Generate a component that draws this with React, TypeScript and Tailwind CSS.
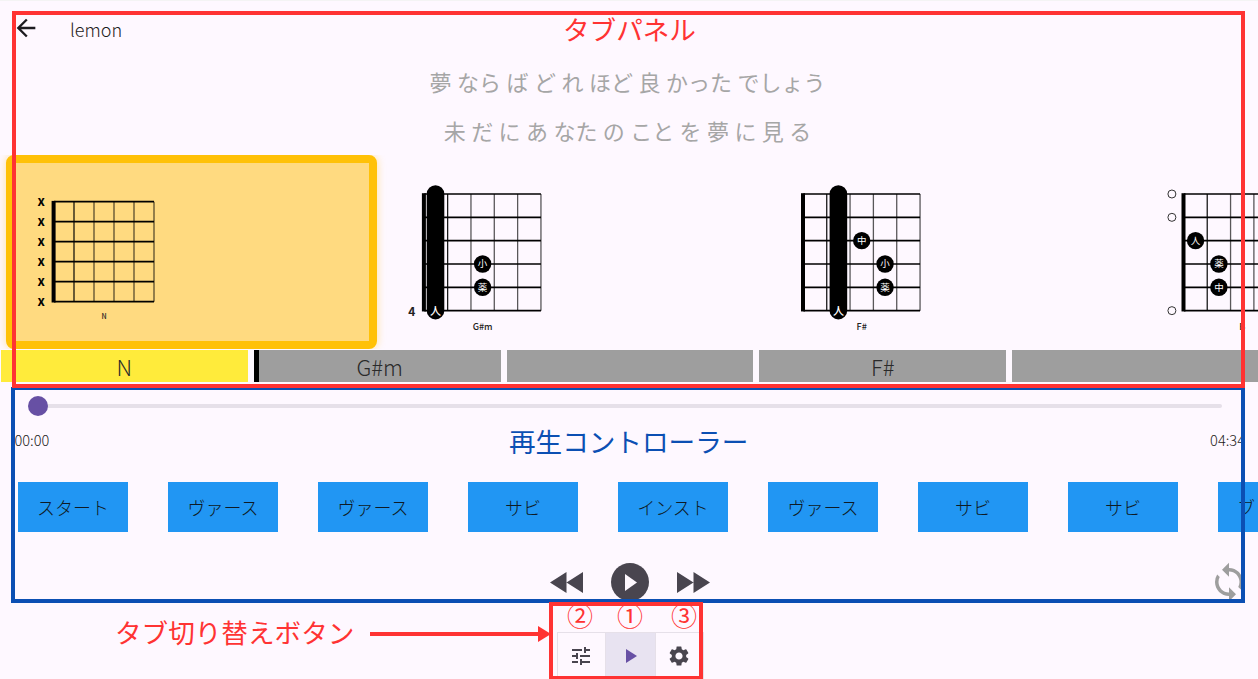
import { MdArrowBack, MdSettings, MdSync, MdTune } from "react-icons/md";

type Dot = { x: number; y: number; label: string };
type ChordData = {
  name: string;
  x0: number;
  y0: number;
  cell: number;
  barre?: number;
  fret?: string;
  dots?: Dot[];
  marks?: { y: number; kind: "x" | "o" }[];
  nameSize?: number;
};

const sections = ["スタート", "ヴァース", "ヴァース", "サビ", "インスト", "ヴァース", "サビ", "サビ", "ブリッジ"];

const lyricOne = ["夢", "なら", "ば", "ど", "れ", "ほど", "良", "かった", "でしょう"];
const lyricTwo = ["未", "だ", "に", "あ", "なた", "の", "こと", "を", "夢", "に", "見", "る"];

const chords: ChordData[] = [
  { name: "G#m", x0: 44.3, y0: 39, cell: 23.33, barre: 0.48, fret: "4", dots: [{ x: 2.5, y: 3, label: "小" }, { x: 2.5, y: 4, label: "薬" }] },
  { name: "F#", x0: 43.4, y0: 39, cell: 23.33, barre: 1.5, dots: [{ x: 2.5, y: 2, label: "中" }, { x: 3.5, y: 3, label: "小" }, { x: 3.5, y: 4, label: "薬" }] },
  {
    name: "B",
    x0: 43.9,
    y0: 39,
    cell: 23.33,
    dots: [{ x: 0.5, y: 2, label: "人" }, { x: 1.5, y: 3, label: "薬" }, { x: 1.5, y: 4, label: "中" }],
    marks: [{ y: 0, kind: "o" }, { y: 1, kind: "o" }, { y: 5, kind: "o" }],
  },
];

const emptyChord: ChordData = {
  name: "N",
  x0: 40,
  y0: 38.7,
  cell: 20,
  marks: [0, 1, 2, 3, 4, 5].map((y) => ({ y, kind: "x" as const })),
  nameSize: 7,
};

function ChordDiagram({ chord, width, height }: { chord: ChordData; width: number; height: number }) {
  const { x0, y0, cell } = chord;
  const h = cell * 5;
  return (
    <svg width={width} height={height} className="block shrink-0">
      {[1, 2, 3, 4, 5].map((i) => (
        <line key={i} x1={x0 + cell * i} x2={x0 + cell * i} y1={y0} y2={y0 + h} stroke="#000" strokeOpacity={i > 1 ? 0.65 : 0.9} strokeWidth={1.3} />
      ))}
      {[0, 1, 2, 3, 4, 5].map((i) => (
        <line key={i} x1={x0} x2={x0 + h} y1={y0 + cell * i} y2={y0 + cell * i} stroke="#000" strokeWidth={1.7} />
      ))}
      <rect x={x0 - 2.4} y={y0 - 0.8} width={4} height={h + 1.6} fill="#000" />
      {chord.barre !== undefined && (
        <>
          <rect x={x0 + cell * chord.barre - 8.8} y={y0 - 8.8} width={17.6} height={h + 17.6} rx={8.8} fill="#000" />
          <text x={x0 + cell * chord.barre} y={y0 + h + 4} textAnchor="middle" fontSize={11} fontWeight={500} fill="#fff">
            人
          </text>
        </>
      )}
      {chord.dots?.map((d) => (
        <g key={d.label}>
          <circle cx={x0 + cell * d.x} cy={y0 + cell * d.y} r={8.7} fill="#000" />
          <text x={x0 + cell * d.x} y={y0 + cell * d.y + 3.4} textAnchor="middle" fontSize={9.5} fill="#fff">
            {d.label}
          </text>
        </g>
      ))}
      {chord.marks?.map((m) =>
        m.kind === "o" ? (
          <circle key={m.y} cx={x0 - 12} cy={y0 + cell * m.y} r={4} fill="none" stroke="#333" strokeWidth={1} />
        ) : (
          <text key={m.y} x={x0 - 12.8} y={y0 + cell * m.y + 4} textAnchor="middle" fontSize={13} fontWeight={700} fill="#000">
            x
          </text>
        ),
      )}
      {chord.fret && (
        <text x={x0 - 12.5} y={y0 + h + 5.5} textAnchor="middle" fontSize={12} fontWeight={700} fill="#222">
          {chord.fret}
        </text>
      )}
      <text x={x0 + h / 2} y={y0 + h + (chord.nameSize ? 17.5 : 19)} textAnchor="middle" fontSize={chord.nameSize ?? 9} fontWeight={500} fill="#222">
        {chord.name}
      </text>
    </svg>
  );
}

function ChordBar({ name, active, cursor }: { name: string; active?: boolean; cursor?: boolean }) {
  return (
    <div className={"flex h-full w-[246.8px] shrink-0 items-center justify-center pt-[1px] text-[22px] font-light text-[#2a2a2a] " + (active ? "bg-[#ffeb3b]" : "bg-[#9e9e9e]") + (cursor ? " border-l-[5px] border-black" : "")}>
      {name}
    </div>
  );
}

function Annotations() {
  return (
    <>
      <div className="pointer-events-none absolute left-[11px] top-[386px] h-[216px] w-[1234px] border-4 border-t-[3px] border-[#0b4fb3]" />
      <div className="pointer-events-none absolute left-[12px] top-[10px] h-[377px] w-[1233px] border-4 border-[#ff3333]" />
      <div className="pointer-events-none absolute left-[549px] top-[601px] h-[78px] w-[154px] border-4 border-[#ff3333]" />
      <div className="absolute left-[563px] top-[9px] text-[26.6px] leading-[38px] text-[#ff3333]">タブパネル</div>
      <div className="absolute left-[509px] top-[421px] text-[26.6px] leading-[38px] text-[#0b4fb3]">再生コントローラー</div>
      <div className="absolute left-[115px] top-[612px] text-[26.6px] leading-[38px] text-[#ff3333]">タブ切り替えボタン</div>
      <svg className="absolute left-[368px] top-[623px]" width={186} height={20}>
        <rect x={2} y={8} width={172} height={4} fill="#ff3333" />
        <path d="M170 2 L183 10 L170 18 Z" fill="#ff3333" />
      </svg>
      <div className="absolute left-[567px] top-[595px] text-[26px] leading-[38px] text-[#ff3333]">②</div>
      <div className="absolute left-[617px] top-[595px] text-[26px] leading-[38px] text-[#ff3333]">①</div>
      <div className="absolute left-[671px] top-[595px] text-[26px] leading-[38px] text-[#ff3333]">③</div>
    </>
  );
}

export default function App() {
  return (
    <div className="relative h-[679px] w-[1258px] overflow-hidden border-t border-[#f4f4f4] bg-[#fef8ff] font-['Noto_Sans_CJK_JP','Noto_Sans',sans-serif] text-[#1d1b20]">
      <div className="flex h-[55px] items-start">
        <MdArrowBack className="ml-[12px] mt-[13px] text-[#1d1b20]" size={28} />
        <span className="ml-[30px] mt-[15px] text-[18px] font-light leading-[26px]">lemon</span>
      </div>

      <div className="flex h-[99px] flex-col items-center pr-[3px] text-[22px] text-[#a6a6a6]">
        <div className="flex h-[50px] items-center gap-[5.5px]">
          {lyricOne.map((w, i) => (
            <span key={i}>{w}</span>
          ))}
        </div>
        <div className="flex h-[48px] items-center gap-[5.4px]">
          {lyricTwo.map((w, i) => (
            <span key={i}>{w}</span>
          ))}
        </div>
      </div>

      <div className="flex h-[194px] overflow-hidden">
        <div className="ml-[6px] mr-[3.3px] h-[194px] w-[371px] shrink-0 rounded-lg border-[8px] border-[#ffc107] bg-[#ffda80] shadow-[0_0_8px_rgba(255,193,7,0.4)]">
          <ChordDiagram chord={emptyChord} width={355} height={178} />
        </div>
        {chords.map((c) => (
          <ChordDiagram key={c.name} chord={c} width={379.7} height={194} />
        ))}
      </div>

      <div className="ml-px mt-px flex h-[32px] gap-[6px] overflow-hidden">
        <ChordBar name="N" active />
        <ChordBar name="G#m" cursor />
        <ChordBar name="" />
        <ChordBar name="F#" />
        <ChordBar name="" />
      </div>

      <div className="flex h-[48px] items-center pl-[38px] pr-[36px]">
        <div className="relative h-[4px] w-full rounded-full bg-[#e6e0e9]">
          <div className="absolute left-[-10px] top-[-8px] h-[20px] w-[20px] rounded-full bg-[#6750a4]" />
        </div>
      </div>

      <div className="flex h-[20px] items-center justify-between pl-[14.5px] pr-[13px] text-[14.6px] font-light">
        <span>00:00</span>
        <span>04:34</span>
      </div>

      <div className="ml-[18px] mt-[32px] flex gap-[40px] overflow-hidden">
        {sections.map((s, i) => (
          <div key={i} className="flex h-[50px] w-[110px] shrink-0 items-center justify-center bg-[#2196f3] text-[18px] font-light text-[#0f1a24]">
            {s}
          </div>
        ))}
      </div>

      <div className="mt-[31px] grid h-[38px] grid-cols-[1fr_auto_1fr] grid-rows-[38px] items-center">
        <div />
        <div className="flex items-center gap-[28px] pl-[2px]">
          <svg width={33} height={21} viewBox="0 0 33 21">
            <path d="M16.5 0V21L0 10.5ZM33 0V21L16.5 10.5Z" fill="#49454f" />
          </svg>
          <div className="flex h-[38px] w-[38px] items-center justify-center rounded-full bg-[#49454f]">
            <svg width={12} height={17} viewBox="0 0 12 17" className="ml-[1px]">
              <path d="M0 0L12 8.5L0 17Z" fill="#fef8ff" />
            </svg>
          </div>
          <svg width={33} height={21} viewBox="0 0 33 21">
            <path d="M0 0V21L16.5 10.5ZM16.5 0V21L33 10.5Z" fill="#49454f" />
          </svg>
        </div>
        <div className="flex justify-end pr-[8px]">
          <MdSync size={42} className="text-[#9e9e9e]" />
        </div>
      </div>

      <div className="mt-[31px] flex h-[47px] justify-center pl-[2px]">
        <div className="flex h-full w-[49px] items-center justify-center border border-b-0 border-[#e6e0e9] bg-[#fef8ff]">
          <MdTune size={24} className="text-[#49454f]" />
        </div>
        <div className="flex h-full w-[49px] items-center justify-center border-t border-[#e6e0e9] bg-[#e8e3f1] pl-[3px]">
          <svg width={11} height={14} viewBox="0 0 11 14">
            <path d="M0 0L11 7L0 14Z" fill="#6750a4" />
          </svg>
        </div>
        <div className="flex h-full w-[49px] items-center justify-center border border-b-0 border-[#e6e0e9] bg-[#fef8ff]">
          <MdSettings size={24} className="text-[#49454f]" />
        </div>
      </div>

      <Annotations />
    </div>
  );
}
